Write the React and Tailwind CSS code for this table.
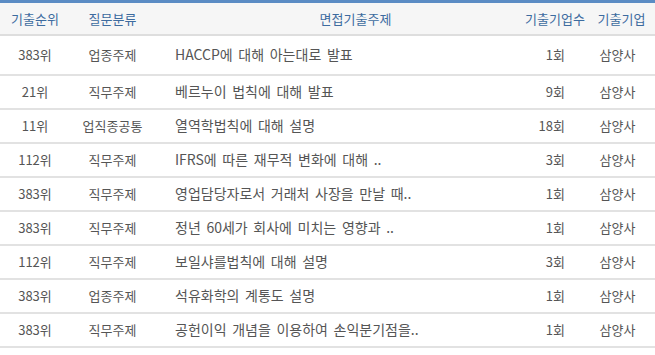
const rows = [
  { rank: "383위", cat: "업종주제", topic: "HACCP에 대해 아는대로 발표", count: "1회", company: "삼양사" },
  { rank: "21위", cat: "직무주제", topic: "베르누이 법칙에 대해 발표", count: "9회", company: "삼양사" },
  { rank: "11위", cat: "업직종공통", topic: "열역학법칙에 대해 설명", count: "18회", company: "삼양사" },
  { rank: "112위", cat: "직무주제", topic: "IFRS에 따른 재무적 변화에 대해 ..", count: "3회", company: "삼양사" },
  { rank: "383위", cat: "직무주제", topic: "영업담당자로서 거래처 사장을 만날 때..", count: "1회", company: "삼양사" },
  { rank: "383위", cat: "직무주제", topic: "정년 60세가 회사에 미치는 영향과 ..", count: "1회", company: "삼양사" },
  { rank: "112위", cat: "직무주제", topic: "보일샤를법칙에 대해 설명", count: "3회", company: "삼양사" },
  { rank: "383위", cat: "업종주제", topic: "석유화학의 계통도 설명", count: "1회", company: "삼양사" },
  { rank: "383위", cat: "직무주제", topic: "공헌이익 개념을 이용하여 손익분기점을..", count: "1회", company: "삼양사" },
];

export default function App() {
  return (
    <div className="w-[655px] h-[355px] overflow-hidden bg-white font-['Noto_Sans_CJK_KR','Noto_Sans',sans-serif] text-[13px] text-[#555]">
      <table className="w-full table-fixed border-collapse border-t-[3px] border-[#5b8cc4]">
        <colgroup>
          <col className="w-[70px]" />
          <col className="w-[85px]" />
          <col className="w-[365px]" />
          <col className="w-[70px]" />
          <col className="w-[65px]" />
        </colgroup>
        <thead>
          <tr className="h-[33px] bg-[#f6f6f6] border-b-2 border-[#dedede] text-[#3d6b9f]">
            <th className="font-normal text-center">기출순위</th>
            <th className="font-normal text-center">질문분류</th>
            <th className="font-normal text-center pl-[36px]">면접기출주제</th>
            <th className="font-normal text-center">기출기업수</th>
            <th className="font-normal text-center pr-[2px]">기출기업</th>
          </tr>
        </thead>
        <tbody>
          {rows.map((r, i) => (
            <tr key={i} className={`${i === 0 ? "h-[40px]" : "h-[34px]"} border-b-2 border-[#e2e2e2]`}>
              <td className="text-center">{r.rank}</td>
              <td className="text-center">{r.cat}</td>
              <td className="pl-[20px] whitespace-nowrap text-[14px] [word-spacing:2.5px]">{r.topic}</td>
              <td className="text-right pr-[25px]">{r.count}</td>
              <td className="text-center pr-[10px]">{r.company}</td>
            </tr>
          ))}
        </tbody>
      </table>
    </div>
  );
}
